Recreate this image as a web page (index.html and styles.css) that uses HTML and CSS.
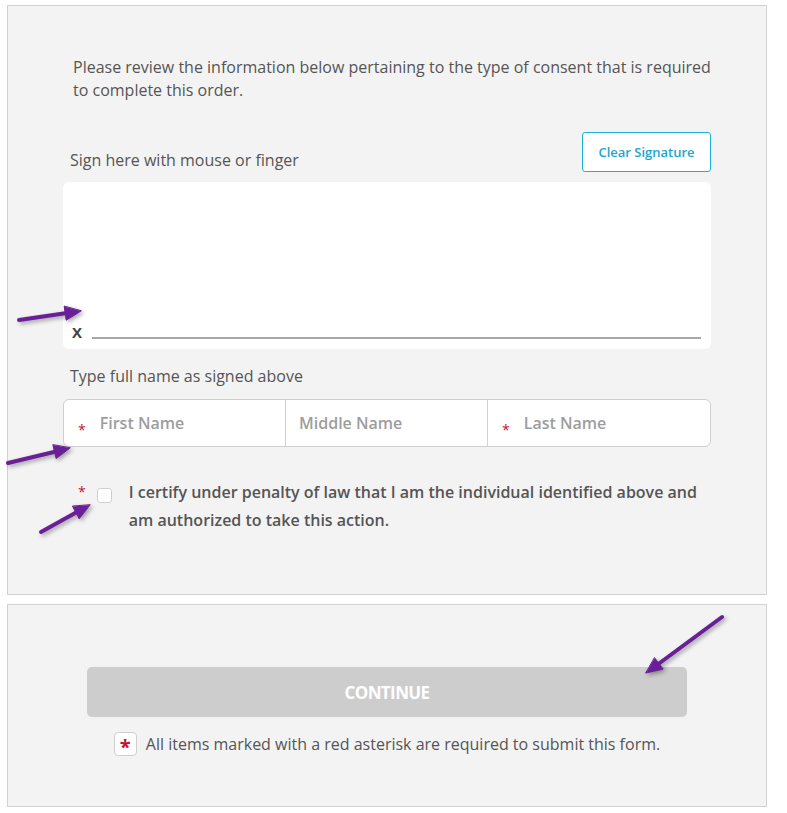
FILE: index.html
```html
<!DOCTYPE html>
<html>
<head>
  <title>Consent</title>
  <link rel="stylesheet" href="styles.css">
</head>
<body>
  <div class="panel consent-panel">
    <p class="intro">Please review the information below pertaining to the type of consent that is required<br>to complete this order.</p>

    <div class="sign-head">
      <label class="field-label">Sign here with mouse or finger</label>
      <button type="button" class="btn-clear">Clear Signature</button>
    </div>

    <div class="sig-pad">
      <div class="sig-line">
        <span class="sig-x">X</span>
        <span class="sig-rule"></span>
      </div>
    </div>

    <label class="field-label name-label">Type full name as signed above</label>
    <div class="name-group">
      <div class="name-cell first">
        <span class="req">*</span>
        <input type="text" placeholder="First Name">
      </div>
      <div class="name-cell middle">
        <input type="text" placeholder="Middle Name">
      </div>
      <div class="name-cell last">
        <span class="req">*</span>
        <input type="text" placeholder="Last Name">
      </div>
    </div>

    <div class="certify">
      <span class="req">*</span>
      <span class="check-box"></span>
      <p class="certify-text">I certify under penalty of law that I am the individual identified above and<br>am authorized to take this action.</p>
    </div>
  </div>

  <div class="panel submit-panel">
    <button type="button" class="btn-continue" disabled>CONTINUE</button>
    <div class="req-note">
      <span class="req-badge">*</span>
      <span>All items marked with a red asterisk are required to submit this form.</span>
    </div>
  </div>

  <!-- annotation arrows drawn over the screenshot -->
  <svg class="arrows" width="787" height="813" viewBox="0 0 787 813">
    <g fill="#6a1f98" stroke="#6a1f98" stroke-linecap="round" stroke-linejoin="round">
      <line x1="19" y1="320" x2="67" y2="313" stroke-width="4"/>
      <polygon points="81,311 66.2,320.2 64.2,306.4" stroke-width="1"/>

      <line x1="8" y1="463" x2="56" y2="451.5" stroke-width="4"/>
      <polygon points="70,448 56.1,458.6 52.9,445" stroke-width="1"/>

      <line x1="41" y1="532" x2="77" y2="512" stroke-width="4"/>
      <polygon points="90,505 79.2,518.8 72.6,506.4" stroke-width="1"/>

      <line x1="722" y1="617" x2="657" y2="665" stroke-width="4"/>
      <polygon points="646,673 663.1,669.1 654.7,657.9" stroke-width="1"/>
    </g>
  </svg>
</body>
</html>
```

FILE: styles.css
```css
body {
  margin: 0;
  position: relative;
  background-color: #fff;
  font-family: "Open Sans", "Noto Sans", Arial, sans-serif;
  color: #555;
}

.panel {
  width: 760px;
  box-sizing: border-box;
  margin-left: 7px;
  background-color: #f3f3f3;
  border: 1px solid #d2d2d2;
}

.consent-panel {
  margin-top: 5px;
  padding: 50px 55px 59px 55px;
  height: 590px;
}

.intro {
  margin: 0;
  padding-left: 10px;
  font-size: 16px;
  line-height: 23px;
  white-space: nowrap;
}

.sign-head {
  display: flex;
  justify-content: space-between;
  align-items: flex-end;
  margin-top: 30px;
}

.field-label {
  display: block;
  padding-left: 7px;
  font-size: 16px;
  line-height: 22px;
  margin-bottom: 1px;
}

.btn-clear {
  width: 129px;
  height: 40px;
  background-color: #fff;
  border: 1px solid #1eb1d6;
  border-radius: 3px;
  color: #1aa6cc;
  font-family: inherit;
  font-size: 13px;
  font-weight: 600;
  cursor: pointer;
}

.sig-pad {
  margin-top: 10px;
  height: 167px;
  background-color: #fff;
  border-radius: 6px;
  display: flex;
  flex-direction: column;
  justify-content: flex-end;
  padding: 0 10px 10px 9px;
  box-sizing: border-box;
}

.sig-line {
  display: flex;
  align-items: flex-end;
}

.sig-x {
  font-size: 15px;
  font-weight: 700;
  color: #444;
  line-height: 15px;
  margin-bottom: -1px;
}

.sig-rule {
  flex: 1;
  height: 2px;
  background-color: #a8a8a8;
  margin-left: 10px;
}

.name-label {
  margin-top: 16px;
  margin-bottom: 0;
}

.name-group {
  display: flex;
  margin-top: 12px;
  height: 48px;
  box-sizing: border-box;
  background-color: #fff;
  border: 1px solid #cfcfcf;
  border-radius: 6px;
}

.name-cell {
  display: flex;
  align-items: center;
}

.name-cell.first {
  width: 222px;
  padding-left: 14px;
  box-sizing: border-box;
  border-right: 1px solid #d2d2d2;
}

.name-cell.middle {
  width: 202px;
  padding-left: 13px;
  box-sizing: border-box;
  border-right: 1px solid #d2d2d2;
}

.name-cell.last {
  flex: 1;
  padding-left: 14px;
}

.name-cell .req {
  margin-top: 14px;
  margin-right: 14px;
}

.name-cell input {
  width: 100%;
  min-width: 0;
  border: none;
  outline: none;
  background: transparent;
  padding: 0;
  font-family: inherit;
  font-size: 16px;
  font-weight: 600;
  color: #555;
}

.name-cell input::placeholder {
  color: #9d9d9d;
}

.req {
  color: #c8102e;
  font-size: 14px;
  line-height: 1;
}

.certify {
  display: flex;
  align-items: flex-start;
  margin-top: 31px;
  padding-left: 15px;
}

.certify .req {
  margin-top: 7px;
  margin-right: 11px;
}

.check-box {
  width: 15px;
  height: 15px;
  margin-top: 10px;
  box-sizing: border-box;
  background-color: #fff;
  border: 1px solid #d0d0d0;
  border-radius: 3px;
}

.certify-text {
  margin: 0 0 0 17px;
  font-size: 16px;
  font-weight: 600;
  line-height: 28px;
  white-space: nowrap;
}

.submit-panel {
  margin-top: 9px;
  height: 203px;
  padding-top: 62px;
  display: flex;
  flex-direction: column;
  align-items: center;
}

.btn-continue {
  width: 600px;
  height: 50px;
  background-color: #cdcdcd;
  border: none;
  border-radius: 5px;
  color: #fff;
  font-family: inherit;
  font-size: 17px;
  font-weight: 700;
  letter-spacing: -0.6px;
}

.req-note {
  display: flex;
  align-items: center;
  margin-top: 15px;
  font-size: 16px;
}

.req-badge {
  width: 23px;
  height: 24px;
  box-sizing: border-box;
  background-color: #fff;
  border: 1px solid #cfcfcf;
  border-radius: 4px;
  color: #c8102e;
  font-size: 20px;
  font-weight: 700;
  text-align: center;
  line-height: 28px;
  margin-right: 9px;
}

.arrows {
  position: absolute;
  top: 0;
  left: 0;
  pointer-events: none;
  filter: drop-shadow(2px 2px 2px rgba(0, 0, 0, 0.35));
}
```
